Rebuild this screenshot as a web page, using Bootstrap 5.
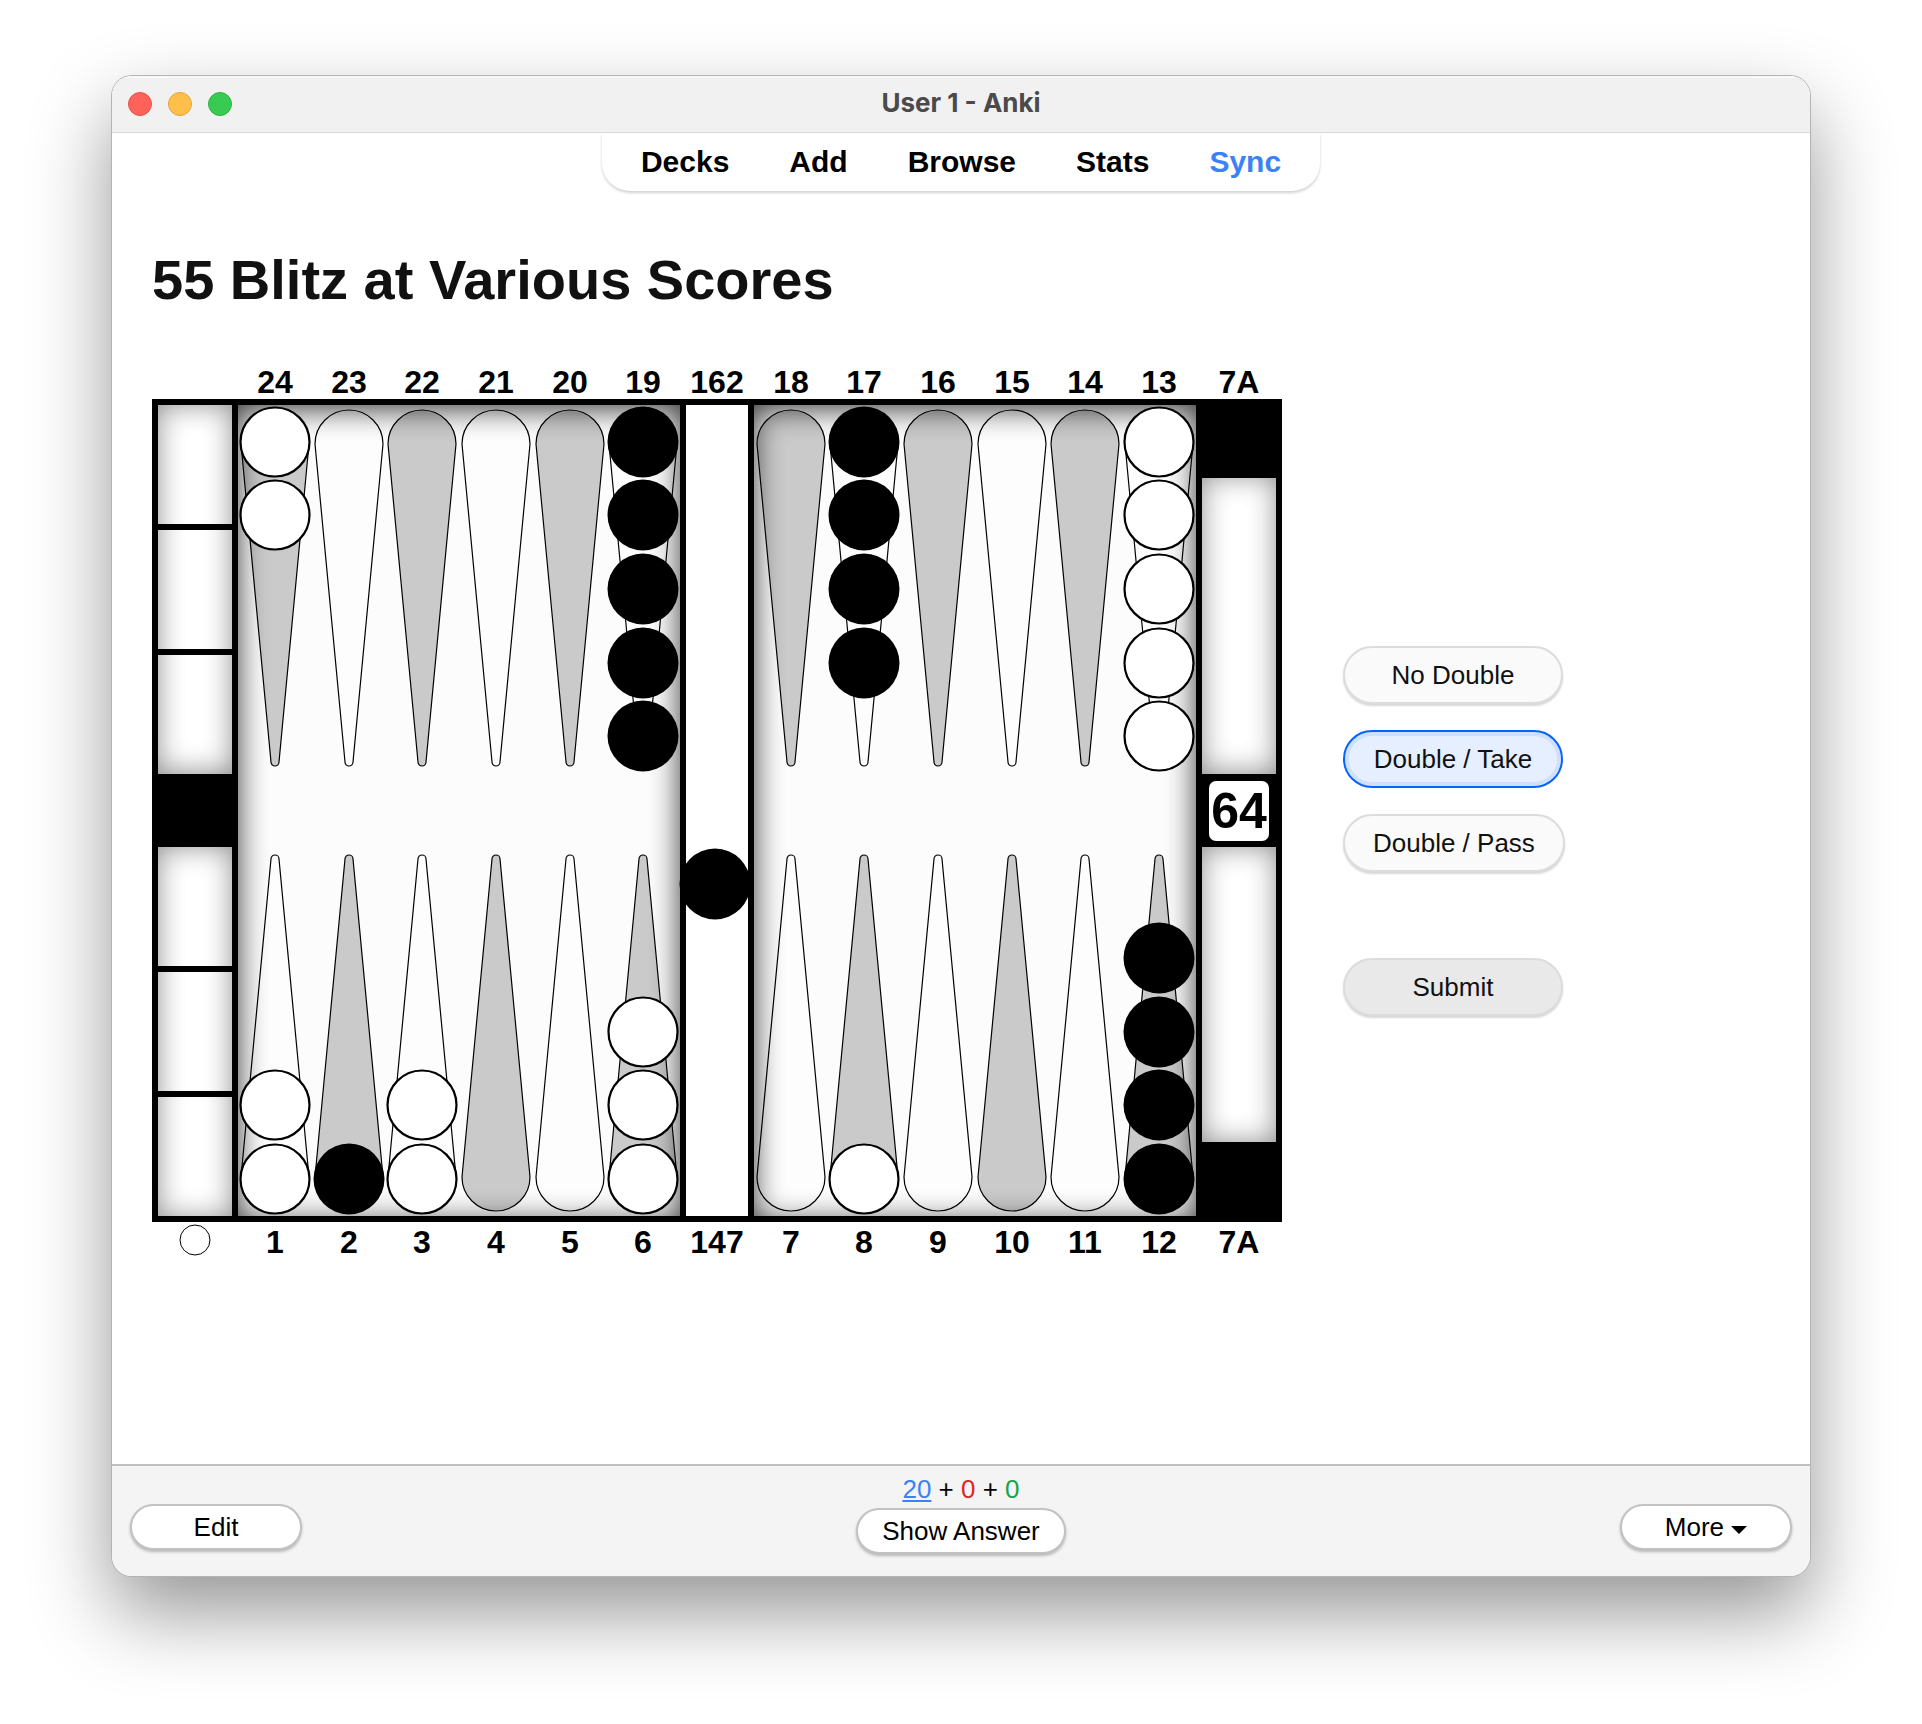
<!DOCTYPE html>
<html lang="en">
<head>
<meta charset="utf-8">
<meta name="viewport" content="width=device-width, initial-scale=1">
<title>User 1 - Anki</title>
<link href="https://cdn.jsdelivr.net/npm/bootstrap@5.3.0/dist/css/bootstrap.min.css" rel="stylesheet">
<style>
  body { font-family: "Liberation Sans", Arial, sans-serif; font-size: 26px; line-height: 30px; color: #000; background: #fff; }
  .desktop { min-height: 100vh; padding: 76px 112px 148px; }
  .app-window { border-radius: 20px; overflow: hidden; background: #fff; box-shadow: 0 0 0 1px #b4b4b4, 0 36px 80px rgba(0,0,0,.42); }
  .titlebar { height: 57px; padding: 0 28px 1px 16px; background: #f1f1f1; border-bottom: 1px solid #d8d8d8; box-shadow: inset 0 2px 0 #f8f8f8; }
  .lights { gap: 16px; width: 104px; }
  .light { width: 24px; height: 24px; border-radius: 50%; }
  .light-close { background: #ff6259; border: 1px solid #e5534b; }
  .light-min { background: #ffbf4a; border: 1px solid #e0a43c; }
  .light-zoom { background: #39ca53; border: 1px solid #2fb045; }
  .win-title { font-family: Inter, sans-serif; font-weight: 700; font-size: 26px; line-height: 30px; padding: 0 0 2px 12px; color: #4a4a4a; }
  .top-menu { gap: 60px; padding: 14px 39px 14px; border-radius: 0 0 28px 28px; box-shadow: 0 2px 3px rgba(0,0,0,.18); font-size: 30px; font-weight: 700; }
  .top-menu a { color: #000; text-decoration: none; }
  .top-menu a.sync { color: #3b82f6; }
  .card-title-text { font-size: 56px; font-weight: 700; line-height: 64px; color: #111; margin: 0 0 48px; }
  .study { padding: 57px 40px 0; }
  .play { gap: 61px; }
  .board { width: 1130px; max-width: 100%; min-width: 0; height: auto; flex: 0 1 auto; }
  .board text { font-family: "Liberation Sans", Arial, sans-serif; font-weight: 700; font-size: 32px; text-anchor: middle; }
  .board text.cube { font-size: 50px; }
  .choices { gap: 26px; padding-top: 42px; }
  .btn-choice { min-width: 220px; height: 58px; padding: 0 28px; border: 2px solid #dcdcdc; border-radius: 29px; background: #fafafa; color: #111; font-size: 26px; line-height: 30px; box-shadow: 0 2px 2px rgba(0,0,0,.16); }
  .btn-choice.selected { border-color: #0563ff; background: #e6efff; box-shadow: inset 0 0 0 4px #cfe0fb; }
  .btn-choice.send { background: #e9e9e9; margin-top: 60px; }
  .bottom-bar { min-height: 112px; padding: 6px 18px 0; background: #f4f4f4; border-top: 2px solid #c0c0c0; }
  .side { flex: 1 1 0; padding-top: 32px; }
  .btn-bar { min-width: 172px; height: 46px; padding: 0 24px; border: 2px solid #c2c2c2; border-radius: 23px; background: #fff; color: #000; font-size: 26px; line-height: 30px; box-shadow: 0 2px 3px rgba(0,0,0,.25); }
  .counts { height: 36px; line-height: 34px; }
  .n-new { color: #3b82f6; text-decoration: underline; }
  .n-learn { color: #dc2626; }
  .n-due { color: #16a34a; }
</style>
</head>
<body>
<div class="desktop d-flex flex-column">
  <div class="app-window d-flex flex-column flex-grow-1">
    <header class="titlebar d-flex align-items-center justify-content-between flex-shrink-0">
      <div class="lights d-flex">
        <span class="light light-close"></span><span class="light light-min"></span><span class="light light-zoom"></span>
      </div>
      <div class="win-title">User 1 - Anki</div>
      <div class="lights"></div>
    </header>
    <nav class="top-menu d-flex align-self-center">
      <a href="#">Decks</a><a href="#">Add</a><a href="#">Browse</a><a href="#">Stats</a><a href="#" class="sync">Sync</a>
    </nav>
    <main class="study flex-grow-1">
      <h1 class="card-title-text">55 Blitz at Various Scores</h1>
      <div class="play d-flex align-items-center">
        <svg class="board" viewBox="0 0 1130 900" role="img" aria-label="Backgammon position">
          <defs>
            <path id="pt" d="M-34 84A34 34 0 0 1 34 84L4 402A4 4 0 0 1 -4 402Z" stroke="#000" stroke-width="1.2"/>
            <circle id="w" r="34.5" fill="#fff" stroke="#000" stroke-width="2.2"/>
            <circle id="b" r="35.5" fill="#000"/>
            <filter id="soft" color-interpolation-filters="sRGB" filterUnits="userSpaceOnUse" x="-100" y="-60" width="1330" height="1020"><feGaussianBlur stdDeviation="15"/></filter>
            <filter id="softTray" color-interpolation-filters="sRGB" filterUnits="userSpaceOnUse" x="-100" y="-60" width="1330" height="1020"><feGaussianBlur stdDeviation="14"/></filter>
            <clipPath id="fields"><path d="M86 45H528V856H86ZM602 45H1044V856H602Z"/></clipPath>
            <clipPath id="trays"><path d="M6 45H80V164H6ZM6 170H80V289H6ZM6 295H80V414H6ZM6 487H80V606H6ZM6 612H80V731H6ZM6 737H80V856H6ZM1050 118H1124V414H1050ZM1050 487H1124V782H1050Z"/></clipPath>
          </defs>
          <rect y="39" width="1130" height="823"/>
          <rect x="534" y="45" width="62" height="811" fill="#fff"/>
          <!-- playing fields with the 24 points -->
          <g clip-path="url(#fields)">
            <rect x="86" y="45" width="958" height="811" fill="#fcfcfc"/>
            <g fill="#cacaca">
              <use href="#pt" x="123"/><use href="#pt" x="270"/><use href="#pt" x="418"/>
              <use href="#pt" x="639"/><use href="#pt" x="786"/><use href="#pt" x="933"/>
            </g>
            <g fill="#fdfdfd">
              <use href="#pt" x="197"/><use href="#pt" x="344"/><use href="#pt" x="491"/>
              <use href="#pt" x="712"/><use href="#pt" x="860"/><use href="#pt" x="1007"/>
            </g>
            <g transform="translate(0 901) scale(1 -1)">
              <g fill="#fdfdfd">
                <use href="#pt" x="123"/><use href="#pt" x="270"/><use href="#pt" x="418"/>
                <use href="#pt" x="639"/><use href="#pt" x="786"/><use href="#pt" x="933"/>
              </g>
              <g fill="#cacaca">
                <use href="#pt" x="197"/><use href="#pt" x="344"/><use href="#pt" x="491"/>
                <use href="#pt" x="712"/><use href="#pt" x="860"/><use href="#pt" x="1007"/>
              </g>
            </g>
            <path filter="url(#soft)" opacity=".78" fill-rule="evenodd" d="M-60 -60H1190V960H-60ZM86 49H528V862H86ZM602 49H1044V862H602Z"/>
          </g>
          <g clip-path="url(#trays)">
            <rect y="39" width="1130" height="823" fill="#fff"/>
            <path filter="url(#softTray)" opacity=".44" fill-rule="evenodd" d="M-60 -60H1190V960H-60ZM6 45H80V412H6ZM6 487H80V858H6ZM1050 116H1124V412H1050ZM1050 487H1124V782H1050Z"/>
          </g>
          <rect x="1057" y="421" width="60" height="60" rx="7" fill="#fff"/>
          <text class="cube" x="1087" y="468">64</text>
          <!-- checkers -->
          <use href="#w" x="123" y="82"/><use href="#w" x="123" y="155"/>
          <use href="#b" x="491" y="82"/><use href="#b" x="491" y="155"/><use href="#b" x="491" y="229"/><use href="#b" x="491" y="303"/><use href="#b" x="491" y="376"/>
          <use href="#b" x="712" y="82"/><use href="#b" x="712" y="155"/><use href="#b" x="712" y="229"/><use href="#b" x="712" y="303"/>
          <use href="#w" x="1007" y="82"/><use href="#w" x="1007" y="155"/><use href="#w" x="1007" y="229"/><use href="#w" x="1007" y="303"/><use href="#w" x="1007" y="376"/>
          <use href="#w" x="123" y="819"/><use href="#w" x="123" y="745"/>
          <use href="#b" x="197" y="819"/>
          <use href="#w" x="270" y="819"/><use href="#w" x="270" y="745"/>
          <use href="#w" x="491" y="819"/><use href="#w" x="491" y="745"/><use href="#w" x="491" y="672"/>
          <use href="#b" x="563" y="524"/>
          <use href="#w" x="712" y="819"/>
          <use href="#b" x="1007" y="819"/><use href="#b" x="1007" y="745"/><use href="#b" x="1007" y="672"/><use href="#b" x="1007" y="598"/>
          <!-- point numbers, pip counts and scores -->
          <text x="123" y="33">24</text><text x="197" y="33">23</text><text x="270" y="33">22</text><text x="344" y="33">21</text><text x="418" y="33">20</text><text x="491" y="33">19</text><text x="565" y="33">162</text><text x="639" y="33">18</text><text x="712" y="33">17</text><text x="786" y="33">16</text><text x="860" y="33">15</text><text x="933" y="33">14</text><text x="1007" y="33">13</text><text x="1087" y="33">7A</text>
          <circle cx="43" cy="880" r="15" fill="#fff" stroke="#000"/>
          <text x="123" y="893">1</text><text x="197" y="893">2</text><text x="270" y="893">3</text><text x="344" y="893">4</text><text x="418" y="893">5</text><text x="491" y="893">6</text><text x="565" y="893">147</text><text x="639" y="893">7</text><text x="712" y="893">8</text><text x="786" y="893">9</text><text x="860" y="893">10</text><text x="933" y="893">11</text><text x="1007" y="893">12</text><text x="1087" y="893">7A</text>
        </svg>
        <div class="choices d-flex flex-column align-items-start flex-shrink-0">
          <button type="button" class="btn-choice">No Double</button>
          <button type="button" class="btn-choice selected" aria-pressed="true">Double / Take</button>
          <button type="button" class="btn-choice">Double / Pass</button>
          <button type="button" class="btn-choice send">Submit</button>
        </div>
      </div>
    </main>
    <footer class="bottom-bar d-flex flex-shrink-0">
      <div class="side"><button type="button" class="btn-bar">Edit</button></div>
      <div class="text-center">
        <div class="counts"><a href="#" class="n-new">20</a> + <span class="n-learn">0</span> + <span class="n-due">0</span></div>
        <button type="button" class="btn-bar">Show Answer</button>
      </div>
      <div class="side text-end"><button type="button" class="btn-bar">More <svg width="16" height="16" viewBox="0 0 16 16" aria-hidden="true"><path d="M0 5H16L8 13Z"/></svg></button></div>
    </footer>
  </div>
</div>
<script src="https://cdn.jsdelivr.net/npm/bootstrap@5.3.0/dist/js/bootstrap.bundle.min.js"></script>
</body>
</html>
